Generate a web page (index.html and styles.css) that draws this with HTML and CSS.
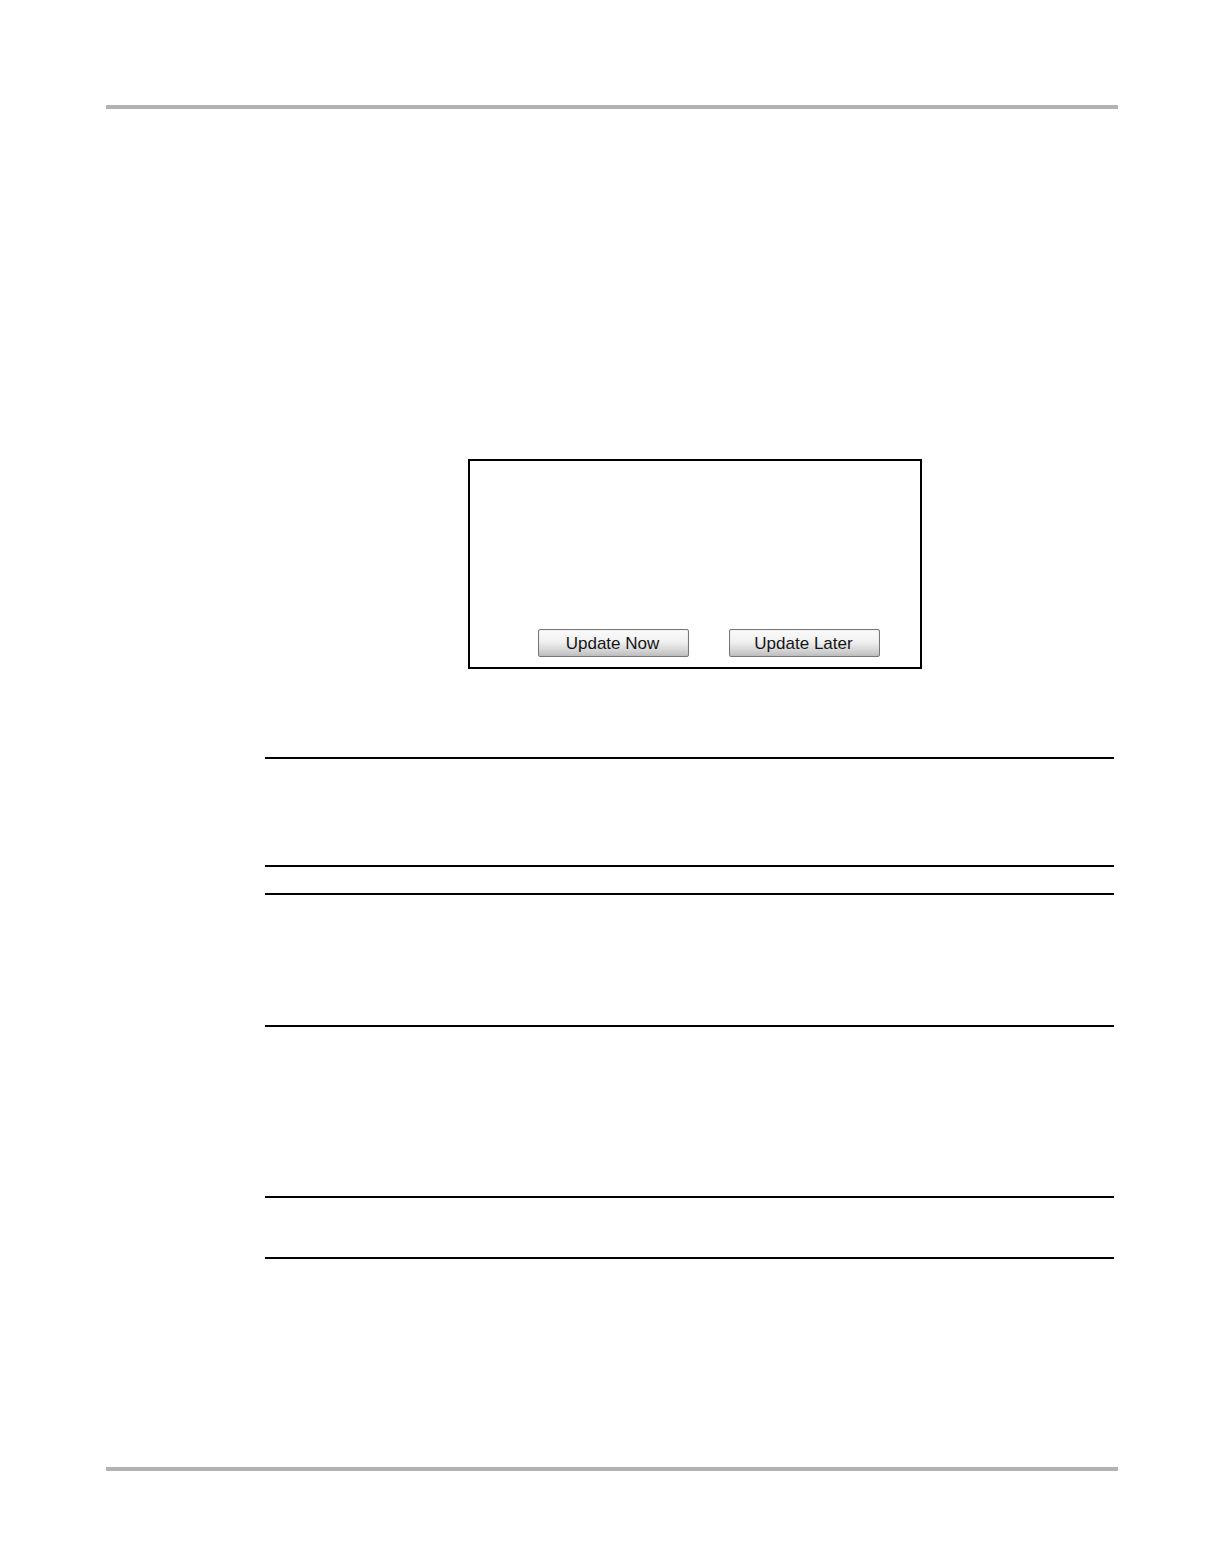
FILE: index.html
```html
<!DOCTYPE html>
<html lang="en">
<head>
<meta charset="utf-8">
<meta name="viewport" content="width=device-width, initial-scale=1">
<title>Software Update</title>
<link rel="stylesheet" href="styles.css">
</head>
<body>
<div class="page">
  <main class="content">
    <section class="dialog">
      <button class="btn" type="button">Update Now</button>
      <button class="btn" type="button">Update Later</button>
    </section>
    <div class="note note-short"></div>
    <div class="note note-tall"></div>
    <div class="note note-slim"></div>
  </main>
</div>
</body>
</html>
```
FILE: styles.css
```css
* {
  box-sizing: border-box;
}

body {
  margin: 0;
  background: #fff;
  color: #111;
  font-family: "Liberation Sans", Arial, sans-serif;
}

.page {
  margin: 105px 88px 95px 106px;
  border-top: 4px solid #b2b2b2;
  border-bottom: 4px solid #b2b2b2;
}

.content {
  display: flex;
  flex-direction: column;
  padding: 350px 4px 208px 159px;
}

/* Update prompt, with its actions along the bottom edge */
.dialog {
  display: flex;
  align-items: flex-end;
  justify-content: flex-end;
  gap: 40px;
  width: 454px;
  max-width: 100%;
  min-height: 210px;
  margin: 0 192px 88px auto;
  padding: 10px 40px;
  border: 2px solid #000;
}

.btn {
  width: 151px;
  height: 28px;
  padding: 2px 2px 0 0;
  border: 1px solid #777;
  border-radius: 2px;
  background: linear-gradient(#fafafa 0%, #f1f1f1 45%, #dcdcdc 70%, #bebebe 100%);
  box-shadow: inset 0 0 1px #aaa;
  color: #151515;
  font-family: inherit;
  font-size: 17px;
  line-height: 24px;
}

/* Ruled note areas */
.note {
  border-top: 2px solid #000;
  border-bottom: 2px solid #000;
}

.note-short {
  min-height: 110px;
}

.note-tall {
  min-height: 134px;
  margin-top: 26px;
}

.note-slim {
  min-height: 63px;
  margin-top: 169px;
}
```
